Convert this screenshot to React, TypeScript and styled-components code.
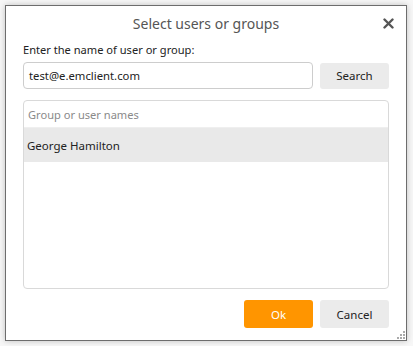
import React from 'react';
import styled, { createGlobalStyle } from 'styled-components';

const GlobalStyle = createGlobalStyle`
  html, body {
    margin: 0;
    padding: 0;
    background: #f7f7f7;
    font-family: "Noto Sans", "Open Sans", sans-serif;
  }
`;

const Page = styled.div`
  width: 413px;
  height: 346px;
  padding: 5px 0 0 5px;
  box-sizing: border-box;
`;

const Dialog = styled.div`
  position: relative;
  width: 402px;
  height: 336px;
  box-sizing: border-box;
  background: #fff;
  border: 1px solid #6d6d6d;
  box-shadow: 0 0 6px rgba(0, 0, 0, 0.22);
  display: flex;
  flex-direction: column;
  padding: 0 17px 12px 17px;
`;

const Header = styled.div`
  display: flex;
  align-items: center;
  justify-content: center;
  height: 33px;
  position: relative;
`;

const Title = styled.div`
  font-size: 14px;
  color: #555;
  padding-top: 2px;
`;

const CloseButton = styled.button`
  position: absolute;
  right: -7px;
  top: 9px;
  width: 16px;
  height: 16px;
  padding: 0;
  border: none;
  background: none;
  display: flex;
  align-items: center;
  justify-content: center;
`;

const Label = styled.div`
  font-size: 11.1px;
  color: #222;
  margin-top: 3px;
  line-height: 16px;
`;

const SearchRow = styled.div`
  display: flex;
  align-items: center;
  gap: 7px;
  margin-top: 4px;
`;

const Input = styled.div`
  flex: 1;
  height: 27px;
  box-sizing: border-box;
  border: 1px solid #cdcdcd;
  border-radius: 4px;
  display: flex;
  align-items: center;
  padding-left: 5px;
  font-size: 11.3px;
  color: #222;
`;

const Button = styled.button<{ $primary?: boolean; $tall?: boolean }>`
  width: 69px;
  height: ${(p) => (p.$tall ? '28px' : '26px')};
  border: none;
  border-radius: 3px;
  background: ${(p) => (p.$primary ? '#ff9500' : '#ebebeb')};
  color: ${(p) => (p.$primary ? '#fff' : '#222')};
  font-family: inherit;
  font-size: 11.5px;
  padding: 0;
`;

const List = styled.div`
  margin-top: 11px;
  flex: 1;
  border: 1px solid #d9d9d9;
  border-radius: 4px;
  display: flex;
  flex-direction: column;
  overflow: hidden;
`;

const ListHeader = styled.div`
  height: 26px;
  display: flex;
  align-items: center;
  padding-left: 4px;
  font-size: 11.1px;
  color: #8a8a8a;
  border-bottom: 1px solid #efefef;
`;

const ListRow = styled.div<{ $selected?: boolean }>`
  height: 34px;
  display: flex;
  align-items: center;
  padding-left: 3px;
  font-size: 11.5px;
  color: #222;
  background: ${(p) => (p.$selected ? '#e9e9e9' : 'transparent')};
`;

const Footer = styled.div`
  display: flex;
  justify-content: flex-end;
  gap: 7px;
  margin-top: 11px;
`;

const Grip = styled.svg`
  position: absolute;
  right: 1px;
  bottom: 1px;
`;

export default function App() {
  return (
    <>
      <GlobalStyle />
      <Page>
        <Dialog>
          <Header>
            <Title>Select users or groups</Title>
            <CloseButton>
              <svg width="11" height="11" viewBox="0 0 11 11">
                <path d="M1.5 1.5 L9.5 9.5 M9.5 1.5 L1.5 9.5" stroke="#555" strokeWidth="2.4" strokeLinecap="round" />
              </svg>
            </CloseButton>
          </Header>
          <Label>Enter the name of user or group:</Label>
          <SearchRow>
            <Input>test@e.emclient.com</Input>
            <Button>Search</Button>
          </SearchRow>
          <List>
            <ListHeader>Group or user names</ListHeader>
            <ListRow $selected>George Hamilton</ListRow>
          </List>
          <Footer>
            <Button $primary $tall>Ok</Button>
            <Button $tall>Cancel</Button>
          </Footer>
          <Grip width="8" height="8" viewBox="0 0 8 8">
            <rect x="6" y="0" width="2" height="2" fill="#aaa" />
            <rect x="3" y="3" width="2" height="2" fill="#aaa" />
            <rect x="6" y="3" width="2" height="2" fill="#aaa" />
            <rect x="0" y="6" width="2" height="2" fill="#aaa" />
            <rect x="3" y="6" width="2" height="2" fill="#aaa" />
            <rect x="6" y="6" width="2" height="2" fill="#aaa" />
          </Grip>
        </Dialog>
      </Page>
    </>
  );
}
